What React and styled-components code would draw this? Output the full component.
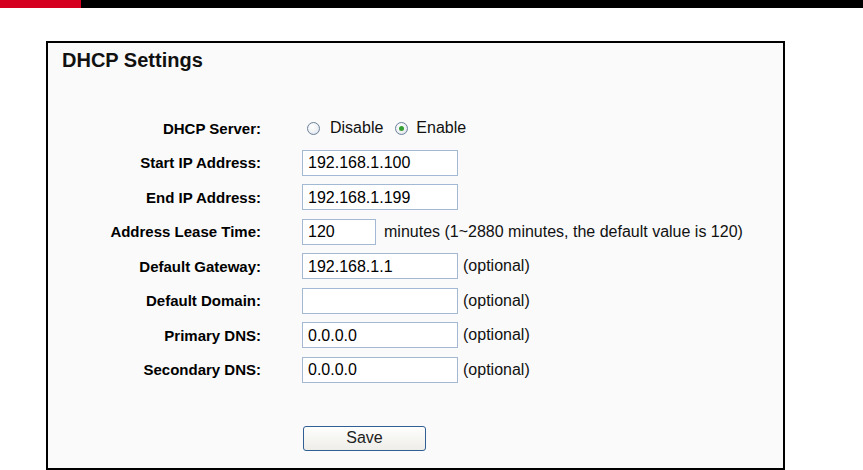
import React, { useState } from "react";
import styled, { createGlobalStyle } from "styled-components";

const Global = createGlobalStyle`
  html, body { margin: 0; padding: 0; background: #ffffff; }
  body { font-family: "Liberation Sans", Arial, sans-serif; color: #000; }
`;

const TopBar = styled.div`
  height: 8px;
  background: #000;
  display: flex;
`;

const TopAccent = styled.div`
  width: 81px;
  background: #d5001f;
`;

const Panel = styled.section`
  box-sizing: border-box;
  margin: 33px 0 0 46px;
  width: 739px;
  height: 429px;
  border: 2px solid #000;
  background: #fafafa;
  padding: 6px 0 0 0;
`;

const Title = styled.h1`
  margin: 0 0 0 14px;
  font-size: 20px;
  line-height: 23px;
  font-weight: bold;
  color: #111;
`;

const Form = styled.div`
  margin-top: 43px;
  display: grid;
  grid-template-columns: 213px 1fr;
  column-gap: 41px;
  grid-auto-rows: 26px;
  row-gap: 8.57px;
  align-items: center;
`;

const Label = styled.div`
  text-align: right;
  font-size: 15px;
  font-weight: bold;
  color: #000;
  white-space: nowrap;
`;

const Field = styled.div`
  display: flex;
  align-items: center;
  height: 26px;
`;

const TextInput = styled.input`
  box-sizing: border-box;
  width: ${(p) => p.$w}px;
  height: 26px;
  border: 1px solid #a3b9d3;
  background: #fff;
  padding: 1px 0 0 5px;
  margin: 0;
  font-family: "Liberation Sans", Arial, sans-serif;
  font-size: 16px;
  color: #000;
  outline: none;
`;

const Note = styled.span`
  margin-left: ${(p) => p.$gap}px;
  font-size: 16px;
  color: #111;
  white-space: nowrap;
`;

const RadioLabel = styled.label`
  display: flex;
  align-items: center;
  margin-left: ${(p) => p.$gap}px;
  font-size: 16px;
  color: #111;
  cursor: pointer;
`;

const RadioDot = styled.span`
  box-sizing: border-box;
  width: 13px;
  height: 13px;
  border-radius: 50%;
  border: 1px solid #6c819b;
  background: radial-gradient(circle at 40% 35%, #ffffff 0%, #eef1f4 55%, #cfd6df 100%);
  margin-right: ${(p) => p.$space}px;
  display: flex;
  align-items: center;
  justify-content: center;
  &::after {
    content: "";
    width: 5px;
    height: 5px;
    border-radius: 50%;
    background: ${(p) => (p.$on ? "#35a032" : "transparent")};
  }
`;

const SaveRow = styled.div`
  margin: 43px 0 0 255px;
`;

const SaveButton = styled.button`
  box-sizing: border-box;
  width: 123px;
  height: 25px;
  border: 1px solid #2f5f94;
  border-radius: 3px;
  background: linear-gradient(#fefefd, #eeede8);
  font-family: "Liberation Sans", Arial, sans-serif;
  font-size: 16px;
  color: #222;
  padding: 0;
  cursor: pointer;
`;

const rows = [
  { label: "Start IP Address:", value: "192.168.1.100", w: 156 },
  { label: "End IP Address:", value: "192.168.1.199", w: 156 },
  {
    label: "Address Lease Time:",
    value: "120",
    w: 74,
    note: "minutes (1~2880 minutes, the default value is 120)",
    gap: 8,
  },
  { label: "Default Gateway:", value: "192.168.1.1", w: 156, note: "(optional)", gap: 5 },
  { label: "Default Domain:", value: "", w: 156, note: "(optional)", gap: 5 },
  { label: "Primary DNS:", value: "0.0.0.0", w: 156, note: "(optional)", gap: 5 },
  { label: "Secondary DNS:", value: "0.0.0.0", w: 156, note: "(optional)", gap: 5 },
];

export default function App() {
  const [enabled, setEnabled] = useState(true);
  return (
    <>
      <Global />
      <TopBar>
        <TopAccent />
      </TopBar>
      <Panel>
        <Title>DHCP Settings</Title>
        <Form>
          <Label>DHCP Server:</Label>
          <Field>
            <RadioLabel $gap={5} onClick={() => setEnabled(false)}>
              <RadioDot $on={!enabled} $space={10} />
              Disable
            </RadioLabel>
            <RadioLabel $gap={12} onClick={() => setEnabled(true)}>
              <RadioDot $on={enabled} $space={8} />
              Enable
            </RadioLabel>
          </Field>
          {rows.map((r) => (
            <React.Fragment key={r.label}>
              <Label>{r.label}</Label>
              <Field>
                <TextInput $w={r.w} defaultValue={r.value} />
                {r.note && <Note $gap={r.gap}>{r.note}</Note>}
              </Field>
            </React.Fragment>
          ))}
        </Form>
        <SaveRow>
          <SaveButton>Save</SaveButton>
        </SaveRow>
      </Panel>
    </>
  );
}
